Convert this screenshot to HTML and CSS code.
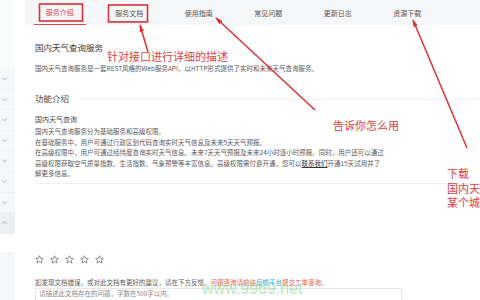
FILE: index.html
```html
<!DOCTYPE html>
<html lang="zh-CN">
<head>
<meta charset="utf-8">
<title>国内天气查询服务</title>
<link rel="stylesheet" href="styles.css">
</head>
<body>
<div class="page">
  <aside class="sidebar">
    <div class="side-top"></div>
    <div class="side-row"><svg class="chev" viewBox="0 0 6 4"><path d="M0.5 0.8 L3 3.2 L5.5 0.8"/></svg></div>
    <div class="side-row"><svg class="chev" viewBox="0 0 6 4"><path d="M0.5 0.8 L3 3.2 L5.5 0.8"/></svg></div>
    <div class="side-row"><svg class="chev" viewBox="0 0 6 4"><path d="M0.5 0.8 L3 3.2 L5.5 0.8"/></svg></div>
    <div class="side-row"><svg class="chev" viewBox="0 0 6 4"><path d="M0.5 0.8 L3 3.2 L5.5 0.8"/></svg></div>
    <div class="side-row"><svg class="chev" viewBox="0 0 6 4"><path d="M0.5 0.8 L3 3.2 L5.5 0.8"/></svg></div>
    <div class="side-row"><svg class="chev" viewBox="0 0 6 4"><path d="M0.5 0.8 L3 3.2 L5.5 0.8"/></svg></div>
    <div class="side-row"><svg class="chev" viewBox="0 0 6 4"><path d="M0.5 0.8 L3 3.2 L5.5 0.8"/></svg></div>
    <div class="side-row open"><svg class="chev" viewBox="0 0 6 4"><path d="M0.5 3.2 L3 0.8 L5.5 3.2"/></svg></div>
    <div class="side-gap"></div>
    <div class="side-bottom"></div>
  </aside>

  <main class="main">
    <nav class="tabs">
      <div class="tab active">服务介绍</div>
      <div class="tab">服务文档</div>
      <div class="tab">使用指南</div>
      <div class="tab">常见问题</div>
      <div class="tab">更新日志</div>
      <div class="tab">资源下载</div>
    </nav>

    <div class="content">
      <h1 class="title">国内天气查询服务</h1>
      <p class="desc">国内天气查询服务是一套REST风格的Web服务API，以HTTP形式提供了实时和未来天气查询服务。</p>

      <div class="section-head"><h2>功能介绍</h2><span class="rule"></span></div>
      <h3 class="sub">国内天气查询</h3>
      <p class="para">国内天气查询服务分为基础服务和高级权限。<br>在基础服务中，用户可通过行政区划代码查询实时天气信息及未来5天天气预报。<br>在高级权限中，用户可通过经纬度查询实时天气信息、未来7天天气预报及未来24小时逐小时预报。同时，用户还可以通过<br>高级权限获取空气质量指数、生活指数、气象预警等丰富信息。高级权限需付费开通，您可以<a class="link">联系我们</a>开通15天试用并了<br>解更多信息。</p>
      <div class="sep"></div>

      <div class="stars">
        <svg class="star" viewBox="0 0 20 20"><path d="M10 1.5 L12.5 7.2 L18.6 7.7 L14 11.8 L15.4 17.8 L10 14.6 L4.6 17.8 L6 11.8 L1.4 7.7 L7.5 7.2 Z"/></svg>
        <svg class="star" viewBox="0 0 20 20"><path d="M10 1.5 L12.5 7.2 L18.6 7.7 L14 11.8 L15.4 17.8 L10 14.6 L4.6 17.8 L6 11.8 L1.4 7.7 L7.5 7.2 Z"/></svg>
        <svg class="star" viewBox="0 0 20 20"><path d="M10 1.5 L12.5 7.2 L18.6 7.7 L14 11.8 L15.4 17.8 L10 14.6 L4.6 17.8 L6 11.8 L1.4 7.7 L7.5 7.2 Z"/></svg>
        <svg class="star" viewBox="0 0 20 20"><path d="M10 1.5 L12.5 7.2 L18.6 7.7 L14 11.8 L15.4 17.8 L10 14.6 L4.6 17.8 L6 11.8 L1.4 7.7 L7.5 7.2 Z"/></svg>
        <svg class="star" viewBox="0 0 20 20"><path d="M10 1.5 L12.5 7.2 L18.6 7.7 L14 11.8 L15.4 17.8 L10 14.6 L4.6 17.8 L6 11.8 L1.4 7.7 L7.5 7.2 Z"/></svg>
      </div>
      <p class="feedback">如发现文档错误，或对此文档有更好的建议，请在下方反馈。<span class="hl-red">问题咨询请前往</span><span class="hl-blue">反馈平台</span><span class="hl-red">提交工单咨询</span>。</p>
      <div class="textarea">请描述此文档存在的问题，字数在500字以内。</div>
    </div>
  </main>

  <svg class="annot" viewBox="0 0 480 300">
    <defs>
      <marker id="ah" viewBox="0 0 10 6" refX="9" refY="3" markerWidth="5" markerHeight="3.2" orient="auto" markerUnits="strokeWidth">
        <path d="M0 0 L10 3 L0 6 Z" fill="#dc3035"/>
      </marker>
    </defs>
    <rect x="39.5" y="4" width="43" height="17" class="box"/>
    <rect x="108.5" y="5" width="39" height="17" class="box"/>
    <line x1="148" y1="52" x2="140" y2="25" class="arrow"/>
    <line x1="315" y1="110" x2="216" y2="18" class="arrow"/>
    <line x1="467" y1="148" x2="413" y2="20" class="arrow"/>
  </svg>
  <div class="note note1">针对接口进行详细的描述</div>
  <div class="note note2">告诉你怎么用</div>
  <div class="note note3">下载<br>国内天<br>某个城</div>
  <div class="watermark">www.9969.net</div>
</div>
</body>
</html>
```

FILE: styles.css
```css
* { box-sizing: border-box; margin: 0; padding: 0; }
html, body { width: 480px; height: 300px; overflow: hidden; background: #fff; }
body { font-family: "Noto Sans CJK SC", "Noto Sans", "Liberation Sans", sans-serif; color: #333; }

.page { position: relative; width: 480px; height: 300px; display: flex; overflow: hidden; }

/* sidebar */
.sidebar { width: 15px; flex: none; display: flex; flex-direction: column; background: #f6f7f8; }
.side-top { height: 69px; background: #fafbfb; }
.side-row { height: 20.6px; display: flex; align-items: center; padding-left: 2px; border-bottom: 1px solid #f0f1f2; }
.side-row.open { background: #eceef0; }
.side-gap { height: 18px; background: #fff; }
.side-bottom { flex: 1; background: #f6f7f8; }
.chev { width: 5px; height: 3.5px; fill: none; stroke: #9a9ea4; stroke-width: 0.9; }

/* main */
.main { flex: 1; margin-left: 10px; display: flex; flex-direction: column; min-width: 0; }
.tabs { height: 25px; background: #f5f6f7; display: flex; flex: none; }
.tab { width: 52px; margin: 0 8.75px; height: 25px; display: flex; align-items: center; justify-content: center; font-size: 7px; color: #555; white-space: nowrap; }
.tab.active { color: #e2474c; border-bottom: 1px solid #e2474c; }

.content { padding-left: 10px; display: flex; flex-direction: column; }
.title { font-size: 8.5px; font-weight: normal; line-height: 12px; margin-top: 16px; color: #3a3a3a; }
.desc { font-size: 6.5px; line-height: 10px; margin-top: 10px; color: #5a5a5a; white-space: nowrap; }
.section-head { display: flex; align-items: center; margin-top: 19px; height: 12px; }
.section-head h2 { font-size: 8.5px; font-weight: normal; line-height: 12px; color: #444; }
.rule { flex: 1; border-top: 1px solid #f0f0f0; margin-left: 10px; margin-top: 2px; }
.sub { font-size: 7px; font-weight: normal; line-height: 10px; margin-top: 10px; color: #4a4a4a; }
.para { font-size: 6.5px; line-height: 10.5px; margin-top: 2px; color: #5a5a5a; white-space: nowrap; }
.link { color: #333; text-decoration: underline; }
.sep { border-top: 1px solid #f0f0f0; margin-top: 4.5px; }

.stars { display: flex; gap: 6px; margin-top: 71px; height: 9px; }
.star { width: 9px; height: 9px; fill: none; stroke: #666; stroke-width: 1.6; stroke-linejoin: round; }

.feedback { font-size: 6.5px; line-height: 10px; margin-top: 13px; color: #5a5a5a; white-space: nowrap; }
.hl-red { color: #e4584c; }
.hl-blue { color: #3a9bd6; }
.textarea { width: 367px; height: 30px; margin-top: 1px; border: 1px solid #e6e6e6; padding: 0 3px; font-size: 6.5px; line-height: 9px; color: #888; white-space: nowrap; }

/* annotations over the screenshot */
.annot { position: absolute; left: 0; top: 0; width: 480px; height: 300px; pointer-events: none; }
.box { fill: none; stroke: #d8323a; stroke-width: 1.6; }
.arrow { stroke: #dc3035; stroke-width: 1.5; marker-end: url(#ah); }
.note { position: absolute; font-size: 11px; color: #e2403f; white-space: nowrap; line-height: 14.5px; }
.note1 { left: 107px; top: 49px; }
.note2 { left: 333px; top: 118px; }
.note3 { left: 447px; top: 166px; }
.watermark { position: absolute; left: 202px; top: 280px; font-family: "Liberation Sans", sans-serif; font-size: 16px; color: rgba(120, 210, 140, 0.55); white-space: nowrap; }
```
